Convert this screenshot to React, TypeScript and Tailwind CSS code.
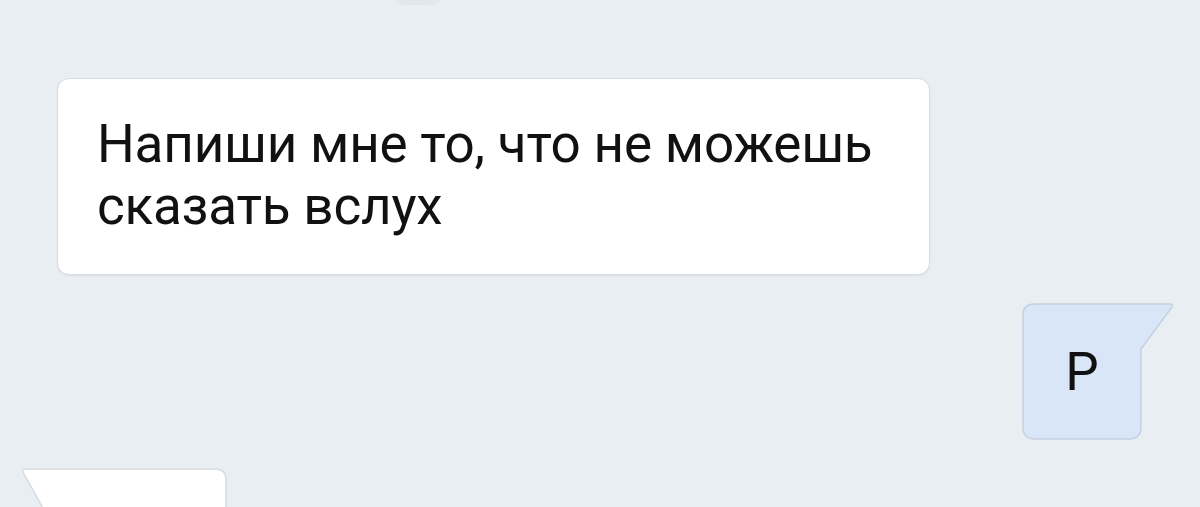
import React from 'react';

// Outgoing bubble with the tail pointing up-right
function OutgoingBubble({ text }: { text: string }) {
  return (
    <div className="relative w-[153px] h-[137px] self-end mr-[25px] shrink-0">
      <svg className="absolute inset-0" width="153" height="137" viewBox="0 0 153 137">
        <path
          d="M12 1 H148 Q152 1 150 4 L119 46 V124 Q119 136 107 136 H13 Q1 136 1 124 V12 Q1 1 12 1 Z"
          fill="#d8e6f8"
          stroke="#c4d1e1"
          strokeWidth="1.5"
        />
      </svg>
      <div className="relative w-[120px] h-full flex items-center justify-center pt-[2px]">
        <span className="text-[53px] leading-none text-[#111111]">{text}</span>
      </div>
    </div>
  );
}

// Incoming bubble at the bottom, cut off by the screen edge
function IncomingTail() {
  return (
    <div className="relative w-[210px] h-[60px] ml-[20px] shrink-0">
      <svg className="absolute inset-0" width="210" height="60" viewBox="0 0 210 60">
        <path
          d="M5 1 H195 Q206 1 206 12 V60 H34 L3 4 Q2 1 5 1 Z"
          fill="#ffffff"
          stroke="#d5dbe2"
          strokeWidth="1.5"
        />
      </svg>
    </div>
  );
}

export default function App() {
  return (
    <div
      className="w-[1200px] h-[507px] overflow-hidden bg-[#e9eef3] flex flex-col"
      style={{ fontFamily: 'Roboto, "Noto Sans", "Liberation Sans", sans-serif' }}
    >
      {/* cut-off chip at the top */}
      <div className="h-0 relative shrink-0">
        <div className="absolute left-[392px] -top-[22px] w-[52px] h-[27px] rounded-full bg-[#e2e7ed]" />
      </div>

      <div className="shrink-0 mt-[78px] ml-[57px] w-[873px] h-[197px] bg-white rounded-[12px] border border-[#d6dce3] shadow-[0_1px_2px_rgba(0,0,0,0.06)] pl-[39px] pt-[34px]">
        <p className="text-[53px] leading-[62px] text-[#111111] tracking-[-0.2px]">
          Напиши мне то, что не можешь
          <br />
          сказать вслух
        </p>
      </div>

      <div className="shrink-0 mt-[28px] flex flex-col">
        <OutgoingBubble text="Р" />
      </div>

      <div className="shrink-0 mt-[28px]">
        <IncomingTail />
      </div>
    </div>
  );
}
